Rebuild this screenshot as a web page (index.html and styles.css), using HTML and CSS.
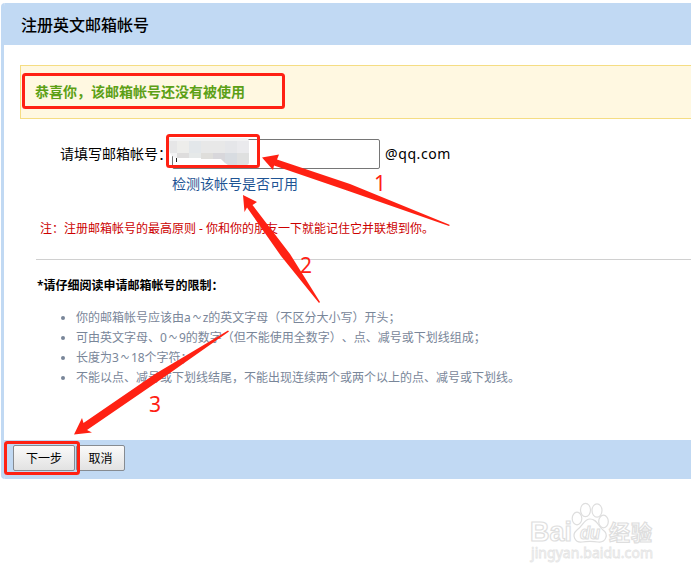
FILE: index.html
```html
<!DOCTYPE html>
<html lang="zh-CN">
<head>
<meta charset="utf-8">
<title>注册英文邮箱帐号</title>
<link rel="stylesheet" href="styles.css">
</head>
<body>
<main class="panel">
  <h1 class="panel-title">注册英文邮箱帐号</h1>
  <section class="content">
    <div class="notice">恭喜你，该邮箱帐号还没有被使用</div>
    <div class="form-row">
      <label for="account">请填写邮箱帐号：</label>
      <input id="account" type="text">
      <span class="domain">@qq.com</span>
    </div>
    <a class="check">检测该帐号是否可用</a>
    <p class="tip">注：注册邮箱帐号的最高原则 - 你和你的朋友一下就能记住它并联想到你。</p>
    <div class="rules">
      <h2>*请仔细阅读申请邮箱帐号的限制：</h2>
      <ul>
        <li>你的邮箱帐号应该由a<span class="tilde">～</span>z的英文字母（不区分大小写）开头；</li>
        <li>可由英文字母、0<span class="tilde">～</span>9的数字（但不能使用全数字）、点、减号或下划线组成；</li>
        <li>长度为3<span class="tilde">～</span>18个字符；</li>
        <li>不能以点、减号或下划线结尾，不能出现连续两个或两个以上的点、减号或下划线。</li>
      </ul>
    </div>
  </section>
  <footer class="actions">
    <button class="next">下一步</button>
    <button class="cancel">取消</button>
  </footer>
</main>
<svg class="overlay" width="691" height="578" viewBox="0 0 691 578">
  <g class="mosaic">
    <path fill="#f2f2f3" d="M169 138H246Q249 138 249 142V162Q249 165 246 165H228L221 159L200 158L176 158Q169 156 169 148Z"/>
    <path fill="#e6e6e7" d="M169 141h8v12h-7z"/>
    <path fill="#ededeb" d="M177 141h12v12h-12z"/>
    <path fill="#e3e7ea" d="M189 141h12v12h-12z"/>
    <path fill="#e8e8e8" d="M201 141h24v12h-24z"/>
    <path fill="#e5e6e9" d="M225 141h12v12h-12z"/>
    <path fill="#eaeaed" d="M237 141h12v12h-12z"/>
    <path fill="#dedddd" d="M177 153h12v5h-12z"/>
    <path fill="#e6e9e9" d="M189 153h12v5h-12z"/>
    <path fill="#dfdedb" d="M201 153h12v6h-12z"/>
    <path fill="#d8d7db" d="M213 153h12v10l-4-4h-8z"/>
    <path fill="#d8dce1" d="M225 153h12v12h-9l-3-2z"/>
    <path fill="#dfe0e0" d="M237 153h12v9q0 3-3 3h-9z"/>
    <path fill="#222" d="M176 158h1v4h-1z"/>
  </g>
  <g class="frames">
    <rect x="23.5" y="74.5" width="260" height="33" rx="2"/>
    <rect x="167.5" y="135.5" width="91" height="31" rx="2"/>
    <rect x="5.500" y="442.500" width="73" height="31" rx="2"/>
  </g>
  <g class="marks">
    <path d="M262 157.500L279 154.500L277 159.500L350 184L449.500 224.800Q450 225.800 449 226L347 190.500L274 165.500L273 170Z"/>
    <path d="M243 195L257 202L252.500 205L290 254L320 302L319 303L281 256L247 207.500L244.500 212Z"/>
    <path d="M74 434.500L82 418L83.500 423L155 374L228 330.500L229 331.500L160 380L87 430L92 432.500Z"/>
    <text x="374" y="191">1</text>
    <text x="300" y="273">2</text>
    <text x="149" y="412">3</text>
  </g>
  <g class="watermark">
    <text class="brand" x="530" y="541" textLength="42" lengthAdjust="spacingAndGlyphs">Bai</text>
    <g>
      <ellipse cx="577" cy="518.500" rx="4.800" ry="6.300"/>
      <ellipse cx="585.500" cy="510" rx="5" ry="6.700"/>
      <ellipse cx="597" cy="510.500" rx="5" ry="6.700"/>
      <ellipse cx="603.500" cy="521.500" rx="4.800" ry="6.300"/>
      <path d="M590 519C584 519 583 526 577 530C571 535 575 543 582 542C588 541 592 541 598 542C606 543 609 534 603 530C598 526 597 519 590 519Z"/>
    </g>
    <text class="du" x="580" y="539" textLength="20" lengthAdjust="spacingAndGlyphs">du</text>
    <text class="exp" x="609" y="540" textLength="43">经验</text>
    <text class="site" x="531" y="558" textLength="122">jingyan.baidu.com</text>
  </g>
</svg>
</body>
</html>
```
FILE: styles.css
```css
* { box-sizing: border-box; }
body {
  margin: 0;
  height: 578px;
  overflow: hidden;
  background: #fff;
  color: #000;
  font-family: "Noto Sans", "Noto Sans CJK SC", sans-serif;
  font-size: 12px;
  text-spacing-trim: space-all;
}
.panel {
  margin: 3px 0 0 1px;
  height: 476px;
  display: flex;
  flex-direction: column;
  border-left: 3px solid #c1d9f3;
  border-radius: 4px 0 0 4px;
  overflow: hidden;
}
.panel-title {
  flex: none;
  height: 42px;
  margin: 0;
  padding-left: 17px;
  background: #c1d9f3;
  font-size: 16px;
  line-height: 44px;
  font-weight: 500;
}
.content { flex: 1; padding: 20px 0 0 16px; }
.notice {
  height: 54px;
  padding-left: 14px;
  border: 1px solid #f5dd83;
  border-right: 0;
  background: #fff8e1;
  color: #5ca016;
  font-size: 14px;
  font-weight: 600;
  line-height: 51px;
}
.form-row {
  display: flex;
  height: 30px;
  margin: 20px 0 0 40px;
  font-size: 14px;
  line-height: 30px;
}
.form-row label { width: 112px; white-space: nowrap; }
.form-row input {
  width: 208px;
  height: 30px;
  padding: 0 3px;
  border: 1px solid #767676;
  border-radius: 2px;
}
.domain { margin-left: 5px; letter-spacing: .6px; }
.check {
  display: block;
  margin: 5px 0 0 152px;
  color: #1e5494;
  font-size: 14px;
  line-height: 20px;
}
.tip {
  margin: 25px 0 0 20px;
  color: #c00;
  line-height: 20px;
}
.rules {
  margin: 20px 0 0 16px;
  border-top: 1px solid #d0d0d0;
}
.rules h2 {
  margin: 16px 0 0 1px;
  font-size: 12px;
  line-height: 20px;
  font-weight: 600;
}
.rules ul {
  margin: 12px 0 0;
  padding: 0 0 0 40px;
  color: #798699;
  line-height: 20px;
}
.tilde {
  display: inline-block;
  width: 12px;
  height: 20px;
  vertical-align: top;
  transform: scaleX(.7);
}
.actions {
  flex: none;
  display: flex;
  gap: 1px;
  height: 39px;
  padding: 5px 0 0 9px;
  background: #c1d9f3;
}
.actions button {
  height: 26px;
  padding: 0;
  border: 1px solid #868b91;
  border-radius: 2px;
  background: linear-gradient(#fafafa, #e2e2e2);
  color: #000;
  font: 12px/22px "Noto Sans CJK SC", sans-serif;
}
.actions .next { width: 62px; }
.actions .cancel { width: 49px; }
.overlay { position: absolute; left: 0; top: 0; }
.frames rect { fill: none; stroke: #ff2113; stroke-width: 3; }
.marks { fill: #ff2113; font: 21px "Noto Sans", sans-serif; }
.watermark { fill: #fff; stroke: #dedede; stroke-width: 1.2; }
.brand { font: 700 28px "Liberation Sans", sans-serif; }
.du { font: italic 700 18px "Liberation Sans", sans-serif; }
.exp { font: 700 21px "Noto Sans CJK SC", sans-serif; }
.site { stroke: #e4e4e4; stroke-width: .8; font: 14px "Noto Sans", sans-serif; }
```
